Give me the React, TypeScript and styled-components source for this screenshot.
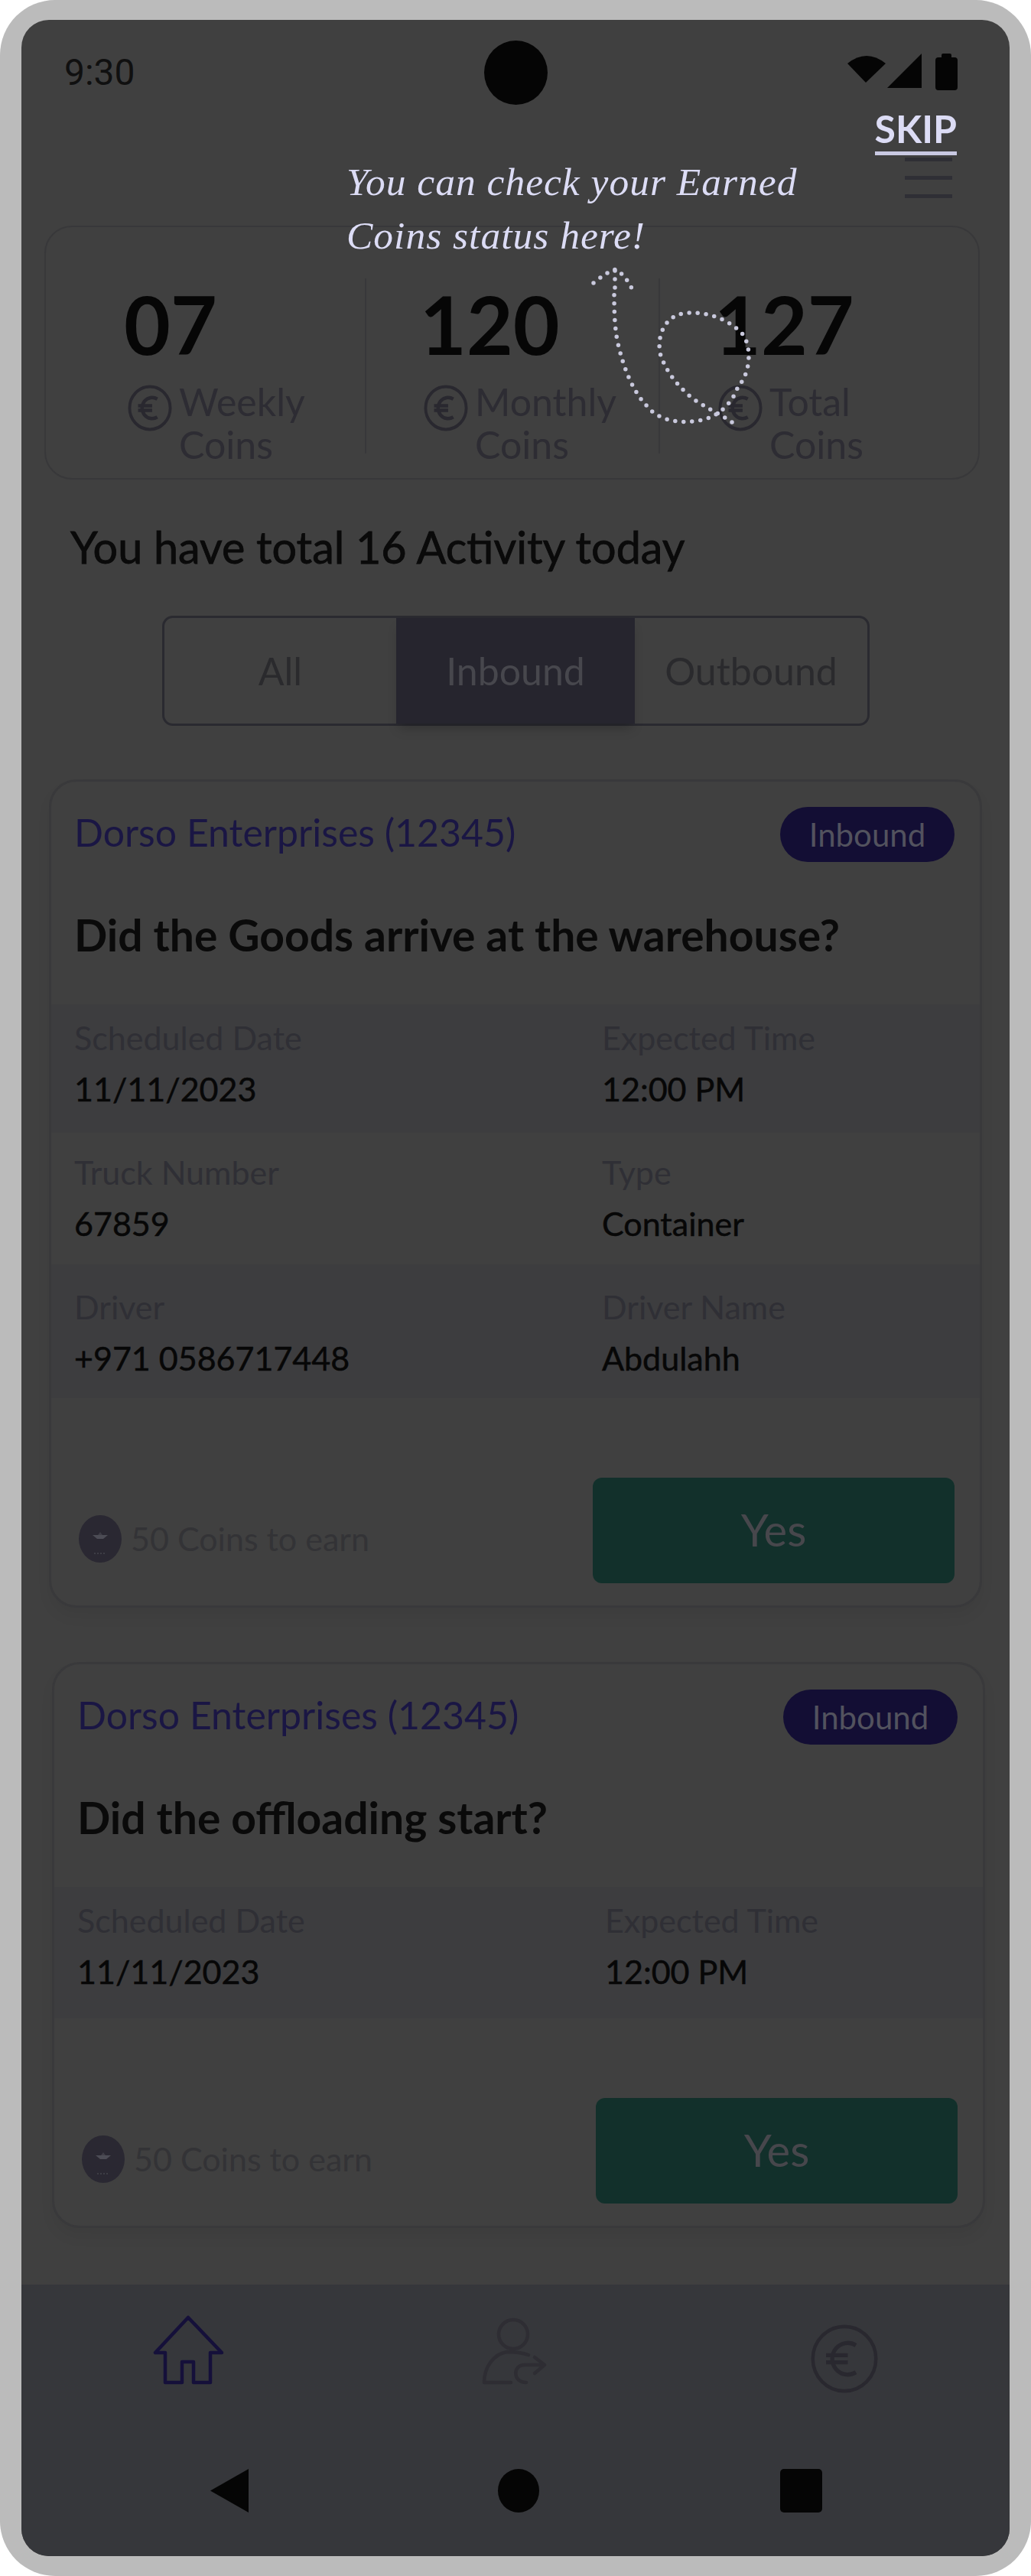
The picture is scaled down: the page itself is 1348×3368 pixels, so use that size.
import styled, { createGlobalStyle } from "styled-components";

const GlobalStyle = createGlobalStyle`
  html, body {
    margin: 0;
    padding: 0;
    background: #fff;
  }
  * {
    box-sizing: border-box;
  }
`;

const Device = styled.div`
  width: 1348px;
  height: 3368px;
  padding: 26px 28px;
  background: #bbbbbb;
  border-radius: 72px;
  font-family: "Lato", "Liberation Sans", sans-serif;
`;

const Screen = styled.div`
  position: relative;
  display: flex;
  flex-direction: column;
  height: 3316px;
  background: #404040;
  border-radius: 36px;
  overflow: hidden;
`;

const StatusBar = styled.div`
  display: grid;
  grid-template-columns: 1fr auto 1fr;
  height: 124px;
  padding: 27px 56px 0;
`;

const Time = styled.div`
  font-family: "Roboto", sans-serif;
  font-size: 48px;
  line-height: 84px;
  color: #101010;
`;

const Camera = styled.div`
  width: 83px;
  height: 84px;
  border-radius: 50%;
  background: #050505;
`;

const StatusIcons = styled.div`
  display: flex;
  justify-content: flex-end;
  align-items: flex-start;
  gap: 2px;
  padding: 17px 12px 0 0;
`;

const Battery = styled.svg`
  margin-left: 15px;
`;

const MenuRow = styled.div`
  display: flex;
  justify-content: flex-end;
  height: 145px;
  padding: 56px 75px 0 0;
`;

const Hamburger = styled.div`
  display: flex;
  flex-direction: column;
  gap: 19px;
  width: 62px;

  span {
    height: 5px;
    background: #2f2f35;
  }
`;

const StatsCard = styled.div`
  display: grid;
  grid-template-columns: 419px 384px 1fr;
  width: 1223px;
  height: 332px;
  margin-left: 30px;
  padding-top: 67px;
  border: 2px solid #38383a;
  border-radius: 36px;
`;

const StatCol = styled.div<{ $indent: number; $divider: boolean }>`
  height: 229px;
  padding: 7px 0 0 ${(p) => p.$indent}px;
  border-right: ${(p) => (p.$divider ? "2px solid #38383a" : "none")};
`;

const StatNumber = styled.div`
  font-size: 105px;
  font-weight: 700;
  line-height: 104px;
  color: #060606;
`;

const StatLabel = styled.div`
  display: flex;
  gap: 9px;
  margin-top: 22px;
  font-size: 50px;
  line-height: 56px;
  color: #2d2c33;

  svg {
    flex: none;
    margin: 6px 0 0 5px;
  }
`;

const Heading = styled.h2`
  margin: 56px 0 0 64px;
  font-size: 57.5px;
  font-weight: 400;
  line-height: 64px;
  color: #0a0a0a;
  -webkit-text-stroke: 0.8px #0a0a0a;
`;

const Tabs = styled.div`
  display: flex;
  width: 925px;
  height: 144px;
  margin: 58px 0 0 184px;
  border: 3px solid #2a2a30;
  border-radius: 14px;
`;

const Tab = styled.div<{ $active?: boolean; $width: number }>`
  display: flex;
  align-items: center;
  justify-content: center;
  width: ${(p) => p.$width}px;
  font-size: 50px;
  color: ${(p) => (p.$active ? "#47474d" : "#2a2a2d")};
  background: ${(p) => (p.$active ? "#26252e" : "transparent")};
  box-shadow: ${(p) => (p.$active ? "0 10px 14px -4px rgba(0, 0, 0, 0.22)" : "none")};
`;

const Card = styled.div<{ $shift: number; $top: number }>`
  width: 1220px;
  margin: ${(p) => p.$top}px 0 0 ${(p) => p.$shift}px;
  padding: 33px 0 29px;
  border: 3px solid #39393b;
  border-radius: 36px;
  box-shadow: 0 12px 18px rgba(0, 0, 0, 0.05);
`;

const CardHead = styled.div`
  display: flex;
  align-items: center;
  justify-content: space-between;
  height: 72px;
  padding: 0 33px 0 30px;
`;

const Client = styled.div`
  margin-bottom: 6px;
  font-size: 50px;
  color: #1a1644;
`;

const Badge = styled.div`
  display: flex;
  align-items: center;
  justify-content: center;
  width: 228px;
  height: 72px;
  border-radius: 36px;
  background: #130e34;
  font-size: 42px;
  color: #52525e;
`;

const Question = styled.div`
  height: 186px;
  padding: 60px 0 0 30px;
  font-size: 57px;
  font-weight: 700;
  line-height: 70px;
  color: #0a0a0a;
`;

const DataRow = styled.div<{ $striped: boolean; $height: number; $pad: number }>`
  display: grid;
  grid-template-columns: 690px 1fr;
  height: ${(p) => p.$height}px;
  padding: ${(p) => p.$pad}px 30px 0;
  background: ${(p) => (p.$striped ? "#3d3d3f" : "transparent")};
`;

const FieldLabel = styled.div`
  font-size: 43px;
  line-height: 50px;
  color: #2f2f35;
`;

const FieldValue = styled.div`
  margin-top: 17px;
  font-size: 43px;
  line-height: 50px;
  color: #070707;
  -webkit-text-stroke: 0.5px #070707;
`;

const CardFoot = styled.div`
  display: flex;
  align-items: flex-end;
  justify-content: space-between;
  margin-top: 104px;
  padding: 0 33px 0 36px;
`;

const Earn = styled.div`
  display: flex;
  align-items: center;
  gap: 12px;
  margin-bottom: 27px;
  font-size: 43px;
  line-height: 52px;
  color: #333336;
`;

const YesButton = styled.div`
  display: flex;
  align-items: center;
  justify-content: center;
  width: 473px;
  height: 138px;
  padding-bottom: 4px;
  border-radius: 12px;
  background: #12302b;
  font-size: 58px;
  color: #47474c;
`;

const BottomArea = styled.div`
  margin-top: auto;
  height: 355px;
  padding-top: 33px;
  background: #36373b;
`;

const NavRow = styled.div`
  display: flex;
  gap: 290px;
  padding-left: 162px;

  svg:last-child {
    margin: 18px 0 0 39px;
  }
`;

const SystemRow = styled.div`
  display: flex;
  align-items: center;
  gap: 315px;
  margin-top: 98px;
  padding-left: 247px;
`;

const BackButton = styled.div`
  width: 50px;
  height: 57px;
  margin-right: 11px;
  background: #050505;
  clip-path: polygon(100% 0, 100% 100%, 0 50%);
`;

const HomeButton = styled.div`
  width: 54px;
  height: 57px;
  border-radius: 50%;
  background: #050505;
`;

const RecentsButton = styled.div`
  width: 55px;
  height: 57px;
  border-radius: 5px;
  background: #050505;
`;

const SkipLink = styled.div`
  position: absolute;
  top: 112px;
  right: 69px;
  border-bottom: 5px solid #c9c9e2;
  font-size: 50px;
  font-weight: 700;
  line-height: 60px;
  color: #dcdcf5;
`;

const TourText = styled.div`
  position: absolute;
  top: 177px;
  left: 425px;
  font-family: "Liberation Serif", serif;
  font-size: 51.5px;
  font-style: italic;
  line-height: 70px;
  letter-spacing: 1px;
  white-space: nowrap;
  color: #dcdcf5;
`;

const TourArrow = styled.svg`
  position: absolute;
  top: 316px;
  left: 735px;
`;

function EuroCoin({ width, height, stroke }: { width: number; height: number; stroke: number }) {
  return (
    <svg width={width} height={height} viewBox="0 0 60 60" preserveAspectRatio="none" fill="none" stroke="#29282f" strokeWidth={stroke}>
      <circle cx="30" cy="30" r="27.5" />
      <path d="M40 18.5a13.5 13.5 0 1 0 0 23M14 27h19M14 33h19" strokeWidth={stroke + 0.5} />
    </svg>
  );
}

function CoinBadge() {
  return (
    <svg width="56" height="62" viewBox="0 0 56 62">
      <ellipse cx="28" cy="31" rx="28" ry="31" fill="#2a2832" />
      <path d="M18 26h20l-6 5h-8z" fill="#4c4c55" />
      <path d="M25 26l3-4 3 4z" fill="#3f3e47" />
      <path d="M20 50h16" stroke="#44444c" strokeWidth="1.5" strokeDasharray="2 2" />
    </svg>
  );
}

const stats = [
  { value: "07", label: "Weekly", indent: 102 },
  { value: "120", label: "Monthly", indent: 70 },
  { value: "127", label: "Total", indent: 71 },
];

const tabs = [
  { name: "All", width: 303 },
  { name: "Inbound", width: 312, active: true },
  { name: "Outbound", width: 304 },
];

type Field = { label: string; value: string };
type Band = { height: number; pad: number };

const firstRows: Field[][] = [
  [
    { label: "Scheduled Date", value: "11/11/2023" },
    { label: "Expected Time", value: "12:00 PM" },
  ],
  [
    { label: "Truck Number", value: "67859" },
    { label: "Type", value: "Container" },
  ],
  [
    { label: "Driver", value: "+971 0586717448" },
    { label: "Driver Name", value: "Abdulahh" },
  ],
];

const firstBands: Band[] = [
  { height: 168, pad: 19 },
  { height: 172, pad: 27 },
  { height: 175, pad: 31 },
];

function ActivityCard(props: { question: string; rows: Field[][]; bands: Band[]; shift: number; top: number }) {
  const { question, rows, bands, shift, top } = props;
  return (
    <Card $shift={shift} $top={top}>
      <CardHead>
        <Client>Dorso Enterprises (12345)</Client>
        <Badge>Inbound</Badge>
      </CardHead>
      <Question>{question}</Question>
      {rows.map((row, i) => (
        <DataRow key={row[0].label} $striped={i % 2 === 0} $height={bands[i].height} $pad={bands[i].pad}>
          {row.map((field) => (
            <div key={field.label}>
              <FieldLabel>{field.label}</FieldLabel>
              <FieldValue>{field.value}</FieldValue>
            </div>
          ))}
        </DataRow>
      ))}
      <CardFoot>
        <Earn>
          <CoinBadge />
          50 Coins to earn
        </Earn>
        <YesButton>Yes</YesButton>
      </CardFoot>
    </Card>
  );
}

export default function App() {
  return (
    <Device>
      <GlobalStyle />
      <Screen>
        <StatusBar>
          <Time>9:30</Time>
          <Camera />
          <StatusIcons>
            <svg width="50" height="40" viewBox="0 0 50 40">
              <path d="M0 13Q25 -7 50 13L24 38Z" fill="#050505" />
            </svg>
            <svg width="46" height="46" viewBox="0 0 46 46">
              <path d="M45 0V45H0Z" fill="#050505" />
            </svg>
            <Battery width="29" height="48" viewBox="0 0 29 48">
              <path d="M8 5V2Q8 0 10 0H19Q21 0 21 2V5H25Q29 5 29 9V44Q29 48 25 48H4Q0 48 0 44V9Q0 5 4 5Z" fill="#050505" />
            </Battery>
          </StatusIcons>
        </StatusBar>

        <MenuRow>
          <Hamburger>
            <span />
            <span />
            <span />
          </Hamburger>
        </MenuRow>

        <StatsCard>
          {stats.map((stat, i) => (
            <StatCol key={stat.label} $indent={stat.indent} $divider={i < 2}>
              <StatNumber>{stat.value}</StatNumber>
              <StatLabel>
                <EuroCoin width={58} height={61} stroke={4} />
                <div>
                  {stat.label}
                  <br />
                  Coins
                </div>
              </StatLabel>
            </StatCol>
          ))}
        </StatsCard>

        <Heading>You have total 16 Activity today</Heading>

        <Tabs>
          {tabs.map((tab) => (
            <Tab key={tab.name} $active={tab.active} $width={tab.width}>
              {tab.name}
            </Tab>
          ))}
        </Tabs>

        <ActivityCard question="Did the Goods arrive at the warehouse?" rows={firstRows} bands={firstBands} shift={36} top={70} />
        <ActivityCard question="Did the offloading start?" rows={firstRows.slice(0, 1)} bands={[{ height: 172, pad: 19 }]} shift={40} top={71} />

        <BottomArea>
          <NavRow>
            <svg width="120" height="110" viewBox="0 0 120 110" fill="none" stroke="#15103a" strokeWidth="4.5" strokeLinejoin="round">
              <path d="M56 10L13 56H26V95H48V68H63V95H85V56H100Z" />
            </svg>
            <svg width="130" height="110" viewBox="0 0 130 110" fill="none" stroke="#2e2d33" strokeWidth="4.5" strokeLinecap="round" strokeLinejoin="round">
              <circle cx="71" cy="32" r="19" />
              <path d="M91 59Q80 55 63 55C45 58 33 75 33 95H68" />
              <path d="M88 95C70 95 70 72 86 72H112M99 62L112 72L99 83" />
            </svg>
            <EuroCoin width={90} height={92} stroke={3} />
          </NavRow>
          <SystemRow>
            <BackButton />
            <HomeButton />
            <RecentsButton />
          </SystemRow>
        </BottomArea>

        <SkipLink>SKIP</SkipLink>
        <TourText>
          You can check your Earned
          <br />
          Coins status here!
        </TourText>
        <TourArrow width="240" height="220" viewBox="760 340 240 220" fill="none" stroke="#c9c9dd" strokeWidth="5.5" strokeLinecap="round" strokeDasharray="0 11">
          <path d="M954 550C940 540 930 537 904 520C885 505 868 485 860 460C856 437 866 415 885 409C910 403 945 410 968 435C982 455 976 490 962 503C955 525 935 545 909 548C880 553 855 545 842 528C825 510 812 480 804 443C800 420 800 400 800 377" />
          <path d="M773 368Q788 355 802 350Q815 358 824 377" />
          <path d="M801 352V378" />
        </TourArrow>
      </Screen>
    </Device>
  );
}
